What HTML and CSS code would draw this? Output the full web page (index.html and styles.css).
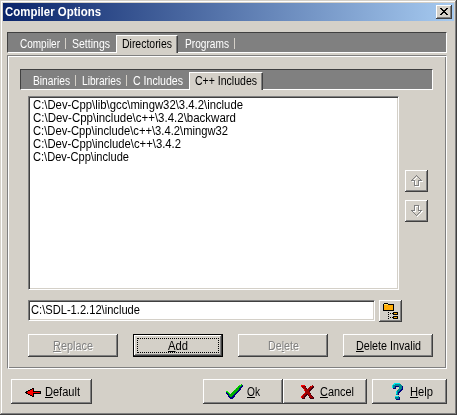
FILE: index.html
```html
<!DOCTYPE html>
<html lang="en">
<head>
<meta charset="utf-8">
<title>Compiler Options</title>
<link rel="stylesheet" href="styles.css">
</head>
<body>
<div class="window">
  <header class="titlebar">
    <h1 class="title"><span data-w="96">Compiler Options</span></h1>
    <button class="close" aria-label="Close"><svg width="8" height="7" viewBox="0 0 8 7" shape-rendering="crispEdges"><path d="M0 0h2v1h1v1h2V1h1V0h2v1H7v1H6v1H5v1h1v1h1v1h1v1H6V6H5V5H3v1H2v1H0V6h1V5h1V4h1V3H2V2H1V1H0z"/></svg></button>
  </header>

  <nav class="tabs outer">
    <a class="tab"><span data-w="40">Compiler</span></a><i class="sep"></i>
    <a class="tab"><span data-w="38">Settings</span></a>
    <a class="tab active"><span data-w="50">Directories</span></a>
    <a class="tab"><span data-w="44">Programs</span></a><i class="sep"></i>
  </nav>

  <main class="page">
    <nav class="tabs inner">
      <a class="tab"><span data-w="37">Binaries</span></a><i class="sep"></i>
      <a class="tab"><span data-w="39">Libraries</span></a><i class="sep"></i>
      <a class="tab"><span data-w="50">C Includes</span></a>
      <a class="tab active"><span data-w="62">C++ Includes</span></a>
    </nav>
    <div class="paths">
      <ul class="list sunken">
        <li><span data-w="210">C:\Dev-Cpp\lib\gcc\mingw32\3.4.2\include</span></li>
        <li><span data-w="203">C:\Dev-Cpp\include\c++\3.4.2\backward</span></li>
        <li><span data-w="195">C:\Dev-Cpp\include\c++\3.4.2\mingw32</span></li>
        <li><span data-w="148">C:\Dev-Cpp\include\c++\3.4.2</span></li>
        <li><span data-w="96">C:\Dev-Cpp\include</span></li>
      </ul>
      <div class="order">
        <button class="btn tool" aria-label="Move up" disabled><svg width="12" height="12" viewBox="0 0 12 12" shape-rendering="crispEdges" fill="none"><path d="M6.5 1.5l5 5h-3v5h-4v-5h-3z" stroke="#fff"/><path d="M5.5 .5l5 5h-3v5h-4v-5h-3z" stroke="#808080"/></svg></button>
        <button class="btn tool" aria-label="Move down" disabled><svg width="12" height="12" viewBox="0 0 12 12" shape-rendering="crispEdges" fill="none"><path d="M6.5 11.5l5-5h-3v-5h-4v5h-3z" stroke="#fff"/><path d="M5.5 10.5l5-5h-3v-5h-4v5h-3z" stroke="#808080"/></svg></button>
      </div>
    </div>
    <div class="entry">
      <div class="input sunken"><span data-w="109">C:\SDL-1.2.12\include</span></div>
      <button class="btn tool browse" aria-label="Browse"><svg width="16" height="16" viewBox="0 0 16 16" shape-rendering="crispEdges"><path d="M1 0h4v1h6v7H0V1h1z"/><path d="M1 1h4v1h5v5H1z" fill="#ffad08"/><path d="M1 1h4v1H1z" fill="#ffe060"/><path d="M5 9h1v1H5zM5 11h1v1H5zM5 13h1v1H5zM5 15h1v1H5zM7 10h1v1H7zM9 10h1v1H9zM7 14h1v1H7zM9 14h1v1H9zM10 9h5v3h-5zM10 13h5v3h-5z"/><path d="M11 10h3v1h-3zM11 14h3v1h-3z" fill="#ffad08"/></svg></button>
    </div>
    <div class="actions">
      <button class="btn" disabled><span data-w="40"><u>R</u>eplace</span></button>
      <button class="btn focused"><span data-w="20"><u>A</u>dd</span></button>
      <button class="btn" disabled><span data-w="31">De<u>l</u>ete</span></button>
      <button class="btn"><span data-w="65"><u>D</u>elete Invalid</span></button>
    </div>
  </main>

  <footer class="footer">
    <button class="btn default"><svg width="16" height="9" viewBox="0 0 16 9" shape-rendering="crispEdges"><path d="M0 4h1V3h2V2h2V1h2V0h2v3h7v3H9v3H7V8H5V7H3V6H1V5H0z"/><path d="M2 4h1V3h2V2h2V1h1v3h7v1H8v3H7V7H5V6H3V5H2z" fill="#f00"/></svg><span data-w="35"><u>D</u>efault</span></button>
    <button class="btn ok"><svg width="17" height="15" viewBox="0 0 17 15" shape-rendering="crispEdges"><path d="M0 8h2v1h1v1h1v1h1v-1h1V9h1V8h1V7h1V6h1V5h1V4h1V3h1V2h2V1h2v2h-1v1h-1v2h-1v1h-1v1h-1v1h-1v1h-1v1h-1v1H9v1H8v1H7v1H4v-1H3v-1H2v-2H1v-1H0z" fill="#000080"/><path d="M0 7h2v1h1v1h1v1h1V9h1V8h1V7h1V6h1V5h1V4h1V3h1V2h1V1h2V0h1v2h-1v1h-1v1h-1v2h-1v1h-1v1h-1v1H9v1H8v1H7v1H6v1H4v-1H3v-2H2V9H1V8H0z" fill="#00b000"/><path d="M0 7h2v1H0zM2 8h1v1H2zM3 9h1v1H3zM9 5h1v1H9zM11 3h1v1h-1zM13 1h2v1h-2z" fill="#0f0"/></svg><span data-w="13"><u>O</u>k</span></button>
    <button class="btn cancel"><svg width="13" height="14" viewBox="0 0 13 14" shape-rendering="crispEdges"><path d="M1 1h4v2h1v2h1V4h1V3h1V2h1V1h3v2h-1v1h-1v1h-1v1H9v2h1v2h1v1h1v1h1v2H9v-1H8v-2H7v-1H6v1H5v1H4v2H1v-2h1v-1h1v-1h1V8h1V7H4V5H3V4H2V3H1z" fill="#400010"/><path d="M0 0h4v2h1v2h2V3h1V2h1V1h2V0h1v2h-1v1h-1v1H9v1H8v2h1v2h1v2h1v1h1v1H9v-1H8v-2H7V9H5v1H4v1H3v2H0v-2h1v-1h1V9h1V8h1V6H3V4H2V3H1V2H0z" fill="#a00000"/><path d="M0 0h4v1H0zM0 1h1v1H0zM3 4h1v2H3zM10 1h1v1h-1zM3 8h1v1H3zM1 10h1v1H1zM0 11h1v2H0z" fill="#f00"/></svg><span data-w="34"><u>C</u>ancel</span></button>
    <button class="btn help"><svg width="11" height="17" viewBox="0 0 11 17" shape-rendering="crispEdges"><path d="M2 1h7v1h1v1h1v4h-1v1H9v1H8v1H7v2H4V9h1V8h1V7h1V4H4v2H1V4h1zM4 14h4v3H4z" fill="#000080"/><path d="M2 0h6v1h1v1h1v4H9v1H8v1H7v1H6v3H4V8h1V7h1V6h1V3H3v2H0V2h1V1h1zM3 13h4v3H3z" fill="#008890"/><path d="M2 0h6v1H2zM0 2h1v3H0zM1 1h2v1H1zM4 8h1v3H4zM3 13h3v1H3z" fill="#00e8f0"/></svg><span data-w="23"><u>H</u>elp</span></button>
  </footer>
</div>
<script src="fit.js"></script>
</body>
</html>
```
FILE: fit.js
```js
// Condense each label to its nominal width.
for (const el of document.querySelectorAll('[data-w]')) {
  const label = document.createElement('b');
  label.className = 'label';
  label.append(...el.childNodes);
  el.append(label);
  const w = Number(el.dataset.w);
  label.style.transform = `scaleX(${w / label.getBoundingClientRect().width})`;
  el.style.width = w + 'px';
}
```
FILE: styles.css
```css
* { box-sizing: border-box; }
body { margin: 0; overflow: hidden; background: #d4d0c8; }
body, button { font: 12px/13px "Liberation Sans", Arial, sans-serif; color: #000; }
svg { display: block; flex: none; }
[data-w] { display: block; height: 13px; flex: none; white-space: nowrap; }
.label { display: inline-block; font-weight: inherit; line-height: 15px; transform-origin: 0 0; }
.title .label { line-height: 13px; }
u { text-decoration: underline; text-decoration-thickness: 1px; text-underline-offset: 1px; text-decoration-skip-ink: none; }

.window {
  width: 457px; height: 415px; padding: 3px;
  display: flex; flex-direction: column;
  background: #d4d0c8;
  box-shadow: inset -1px -1px #404040, inset 1px 1px #d4d0c8, inset -2px -2px #808080, inset 2px 2px #fff;
}
.titlebar {
  height: 18px; flex: none; padding: 0 2px;
  display: flex; align-items: center; justify-content: space-between;
  background: linear-gradient(90deg, #0a246a, #a6caf0);
}
.title { margin: 0; font-size: 12px; line-height: 13px; color: #fff; }
.close {
  width: 16px; height: 14px; padding: 0 1px 1px 0; border: 0;
  display: flex; align-items: center; justify-content: center;
  background: #d4d0c8;
  box-shadow: inset -1px -1px #404040, inset 1px 1px #fff, inset -2px -2px #808080;
}

.tabs {
  height: 21px; flex: none; display: flex;
  background: #808080; color: #fff;
  border: 1px solid; border-color: #404040 #fff #fff #404040;
}
.outer { width: 440px; margin: 11px 0 0 4px; padding-left: 12px; }
.tab { padding-top: 4px; }
.sep { width: 1px; height: 11px; margin: 5px 6px 0 5px; background: #d4d0c8; }
.tab.active {
  height: 18px; margin: 2px 7px 0 6px; padding: 1px 5px 0 5px;
  background: #d4d0c8; color: #000;
  border: solid; border-width: 1px 1px 0 1px; border-color: #fff #404040 #fff #fff;
  box-shadow: inset -1px 0 #808080;
}

.page {
  width: 440px; height: 314px; flex: none; margin: 2px 0 0 4px; padding: 13px 0 0 12px;
  border: 1px solid; border-color: #808080 #fff #fff #808080;
  box-shadow: inset 1px 1px #fff, inset -1px -1px #808080;
}
.inner { width: 413px; padding-left: 12px; }
.inner .tab.active { margin-right: 0; }

.sunken {
  background: #fff; border: 1px solid; border-color: #808080 #fff #fff #808080;
  box-shadow: inset 1px 1px #404040, inset -1px -1px #d4d0c8;
}
.paths { display: flex; gap: 6px; margin: 6px 0 0 8px; }
.list { width: 371px; height: 194px; margin: 0; padding: 1px 0 0 4px; list-style: none; }
.list li { height: 13px; }
.order { display: flex; flex-direction: column; gap: 8px; padding-top: 74px; }

.btn {
  height: 23px; padding: 0; border: 0; flex: none;
  display: flex; align-items: center; justify-content: center;
  background: #d4d0c8;
  box-shadow: inset -1px -1px #404040, inset 1px 1px #fff, inset -2px -2px #808080;
}
.btn:disabled { color: #808080; text-shadow: 1px 1px #fff; }
.tool { width: 23px; height: 22px; }
.entry { display: flex; gap: 4px; margin: 10px 0 0 8px; }
.input { width: 347px; height: 21px; padding: 2px 0 0 2px; }
.actions { display: flex; gap: 15px; margin: 12px 0 0 8px; }
.actions .btn { width: 90px; padding-bottom: 1px; }
.actions .focused {
  border: 1px solid #000; padding: 0 0 1px; outline: 1px dotted #000; outline-offset: -5px;
}

.footer { display: flex; margin: 10px 0 0 8px; }
.footer .btn { height: 25px; justify-content: flex-start; }
.default { width: 81px; }
.default svg { margin: 2px 4px 0 14px; }
.ok { width: 80px; margin-left: 111px; }
.ok svg { margin: 0 4px 0 23px; }
.cancel { width: 84px; }
.cancel svg { margin: 1px 6px 0 18px; }
.help { width: 75px; margin-left: 5px; }
.help svg { margin: 0 7px 0 20px; }
```
